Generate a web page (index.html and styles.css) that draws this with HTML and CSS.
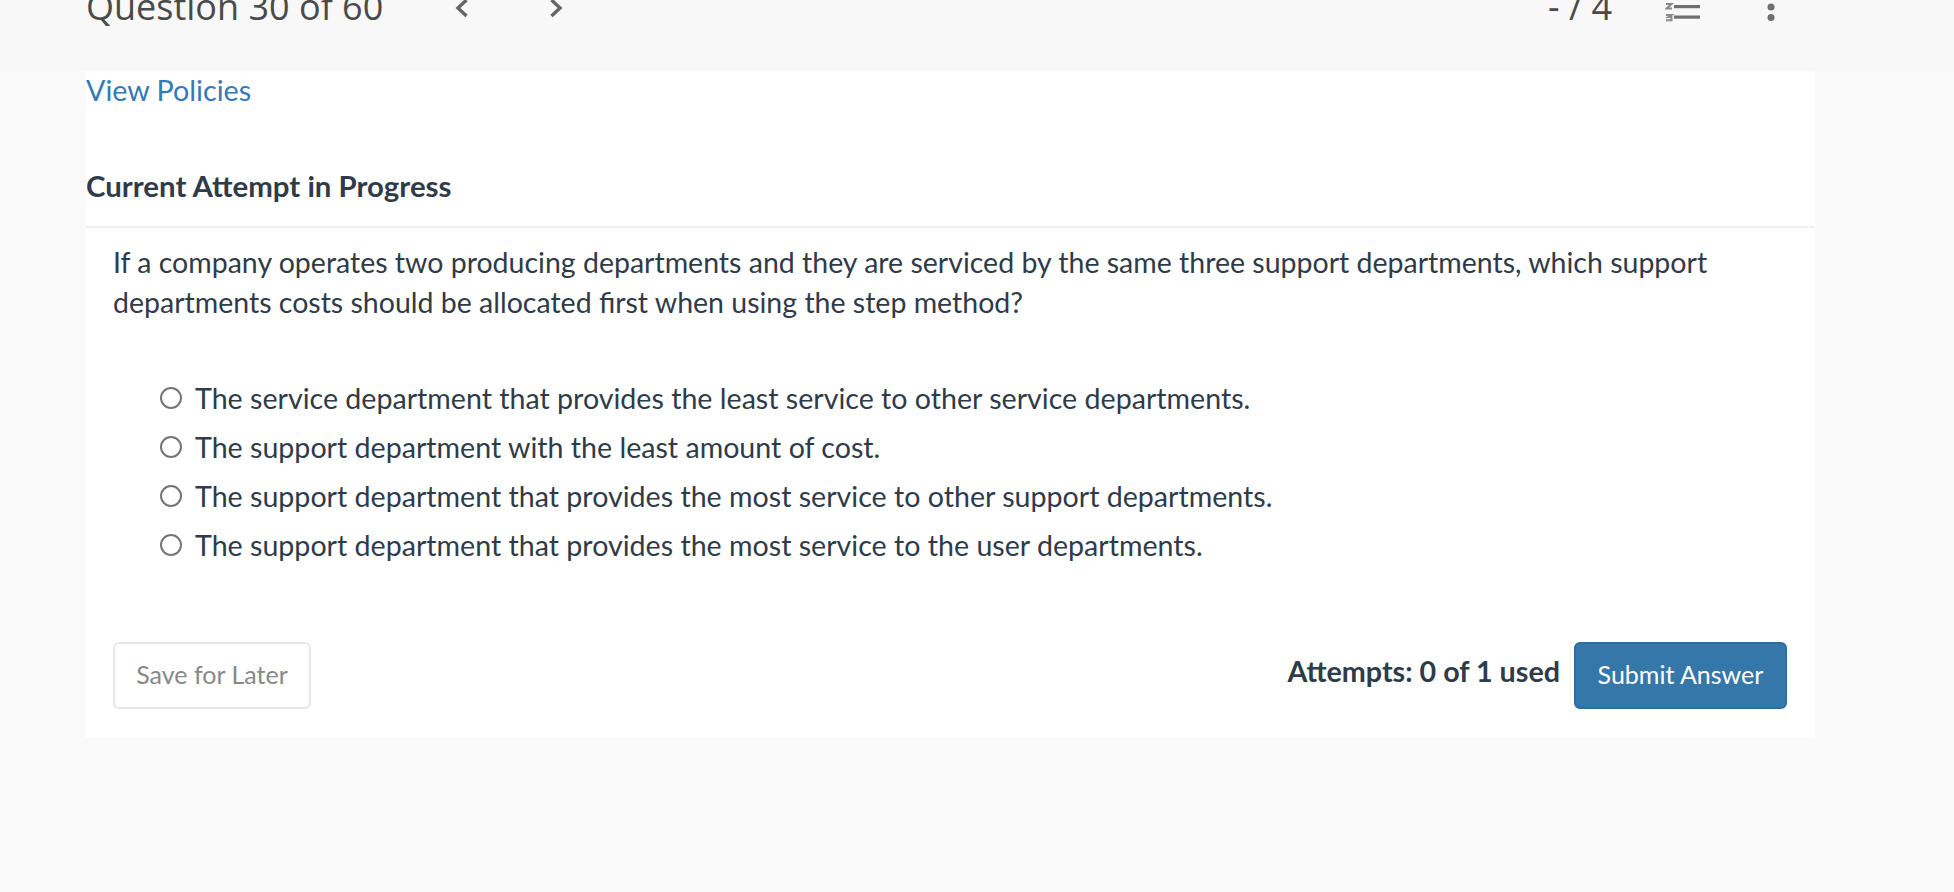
FILE: index.html
```html
<!DOCTYPE html>
<html lang="en">
<head>
<meta charset="utf-8">
<title>Question 30 of 60</title>
<link rel="stylesheet" href="styles.css">
</head>
<body>
<header class="topbar">
  <div class="topbar-row">
    <h1 class="q-title">Question 30 of 60</h1>
    <nav class="q-nav">
      <svg class="chev" width="14" height="20" viewBox="0 0 14 20"><path d="M11.5 2 L3 10 L11.5 18" /></svg>
      <svg class="chev" width="14" height="20" viewBox="0 0 14 20"><path d="M2.5 2 L11 10 L2.5 18" /></svg>
    </nav>
    <div class="q-score">- / 4</div>
    <svg class="list-icon" width="36" height="22" viewBox="0 0 36 22">
      <g class="list-nums"><path d="M1 4H6.5L1.5 8.5H7" /><path d="M1 15H6.5L3.5 17H6.5V20.2H1" /></g>
      <rect x="9" y="5" width="26" height="3.2" />
      <rect x="9" y="15.5" width="26" height="3.2" />
    </svg>
    <svg class="dots" width="8" height="24" viewBox="0 0 8 24"><circle cx="4" cy="7" r="3.5" /><circle cx="4" cy="17.4" r="3.5" /></svg>
  </div>
</header>
<main class="panel">
  <a class="policies" href="#">View Policies</a>
  <h2 class="attempt-head">Current Attempt in Progress</h2>
  <section class="question">
    <p class="prompt">If a company operates two producing departments and they are serviced by the same three support departments, which support departments costs should be allocated first when using the step method?</p>
    <ul class="options">
      <li class="option"><span class="radio"></span>The service department that provides the least service to other service departments.</li>
      <li class="option"><span class="radio"></span>The support department with the least amount of cost.</li>
      <li class="option"><span class="radio"></span>The support department that provides the most service to other support departments.</li>
      <li class="option"><span class="radio"></span>The support department that provides the most service to the user departments.</li>
    </ul>
    <div class="actions">
      <button class="btn btn-save" type="button">Save for Later</button>
      <div class="submit-group">
        <span class="attempts">Attempts: 0 of 1 used</span>
        <button class="btn btn-submit" type="button">Submit Answer</button>
      </div>
    </div>
  </section>
</main>
</body>
</html>
```
FILE: styles.css
```css
* { box-sizing: border-box; }
html, body { margin: 0; height: 100%; }
body {
  background: #fafafa;
  font-family: "Lato", "Liberation Sans", sans-serif;
  color: #2f3b48;
  overflow: hidden;
}
.topbar { height: 71px; background: #f8f8f8; padding-left: 86px; overflow: hidden; }
.topbar-row { display: flex; align-items: flex-start; height: 44px; margin-top: -15px; color: #4a4a4a; }
.q-title { flex: none; margin: 0; width: 369px; font: 400 36px/44px "Open Sans", sans-serif; color: #4a4a4a; white-space: nowrap; }
.q-nav { flex: none; display: flex; gap: 80px; width: 1093px; margin-top: 13px; }
.chev { fill: none; stroke: #666; stroke-width: 3.4; }
.q-score { flex: none; width: 117px; font: 400 36px/44px "Open Sans", sans-serif; white-space: nowrap; color: #4a4a4a; }
.list-icon { flex: none; margin-top: 15px; fill: #6f6f6f; }
.list-nums { fill: none; stroke: #8a8a8a; stroke-width: 2; }
.dots { flex: none; margin-left: 66px; margin-top: 15px; fill: #6f6f6f; }
.panel { width: 1728px; height: 667px; margin-left: 86px; background: #fff; }
.policies { display: block; font-size: 28.7px; line-height: 38px; height: 74px; color: #337ab7; text-decoration: none; white-space: nowrap; }
.attempt-head { margin: 0; height: 83px; padding-top: 21px; font-size: 29.4px; line-height: 40px; font-weight: 700; color: #2f3b48; border-bottom: 2px solid #f0f0f0; }
.question { padding: 14px 27px 0; }
.prompt { margin: 0; font-size: 28.5px; line-height: 40px; color: #2f3b48; }
.options { list-style: none; margin: 0; padding: 51px 0 0 47px; }
.option { display: flex; align-items: center; height: 49px; gap: 13px; font-size: 28.6px; white-space: nowrap; }
.radio { flex: none; width: 22px; height: 22px; border: 2px solid #757575; border-radius: 50%; background: #fff; }
.actions { display: flex; justify-content: space-between; align-items: center; margin-top: 73px; }
.submit-group { display: flex; align-items: center; gap: 14px; }
.attempts { font-size: 28.7px; font-weight: 700; line-height: 40px; margin-top: -10px; white-space: nowrap; }
.btn { height: 67px; padding-bottom: 4px; border-radius: 6px; font-family: inherit; font-size: 25px; }
.btn-save { width: 198px; background: #fff; color: #888; border: 2px solid #e6e6e6; }
.btn-submit { width: 213px; background: #3677a9; color: #fff; border: 2px solid #2e6da4; }
```
